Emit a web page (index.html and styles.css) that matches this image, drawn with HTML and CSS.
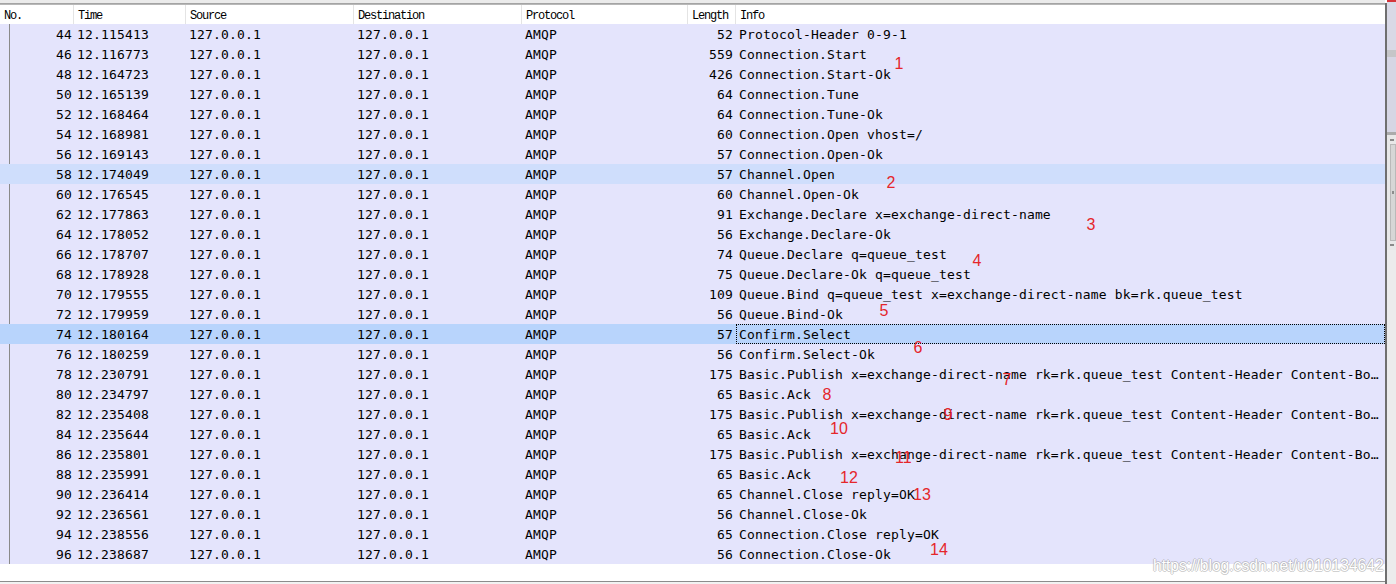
FILE: index.html
```html
<!DOCTYPE html>
<html>
<head>
<meta charset="utf-8">
<title>Wireshark AMQP</title>
<link rel="stylesheet" href="styles.css">
</head>
<body>
<div class="window">
  <div class="pane">
    <div class="topstrip"></div>
    <div class="header">
      <span class="hc">No.</span>
      <span class="hc">Time</span>
      <span class="hc">Source</span>
      <span class="hc">Destination</span>
      <span class="hc">Protocol</span>
      <span class="hc">Length</span>
      <span class="hc last">Info</span>
    </div>
    <div class="rows">
      <div class="row"><span class="num">44</span><span class="c">12.115413</span><span class="c">127.0.0.1</span><span class="c">127.0.0.1</span><span class="c">AMQP</span><span class="len">52</span><span class="c info">Protocol-Header 0-9-1</span></div>
      <div class="row"><span class="num">46</span><span class="c">12.116773</span><span class="c">127.0.0.1</span><span class="c">127.0.0.1</span><span class="c">AMQP</span><span class="len">559</span><span class="c info">Connection.Start</span></div>
      <div class="row"><span class="num">48</span><span class="c">12.164723</span><span class="c">127.0.0.1</span><span class="c">127.0.0.1</span><span class="c">AMQP</span><span class="len">426</span><span class="c info">Connection.Start-Ok</span></div>
      <div class="row"><span class="num">50</span><span class="c">12.165139</span><span class="c">127.0.0.1</span><span class="c">127.0.0.1</span><span class="c">AMQP</span><span class="len">64</span><span class="c info">Connection.Tune</span></div>
      <div class="row"><span class="num">52</span><span class="c">12.168464</span><span class="c">127.0.0.1</span><span class="c">127.0.0.1</span><span class="c">AMQP</span><span class="len">64</span><span class="c info">Connection.Tune-Ok</span></div>
      <div class="row"><span class="num">54</span><span class="c">12.168981</span><span class="c">127.0.0.1</span><span class="c">127.0.0.1</span><span class="c">AMQP</span><span class="len">60</span><span class="c info">Connection.Open vhost=/</span></div>
      <div class="row"><span class="num">56</span><span class="c">12.169143</span><span class="c">127.0.0.1</span><span class="c">127.0.0.1</span><span class="c">AMQP</span><span class="len">57</span><span class="c info">Connection.Open-Ok</span></div>
      <div class="row hl"><span class="num">58</span><span class="c">12.174049</span><span class="c">127.0.0.1</span><span class="c">127.0.0.1</span><span class="c">AMQP</span><span class="len">57</span><span class="c info">Channel.Open</span></div>
      <div class="row"><span class="num">60</span><span class="c">12.176545</span><span class="c">127.0.0.1</span><span class="c">127.0.0.1</span><span class="c">AMQP</span><span class="len">60</span><span class="c info">Channel.Open-Ok</span></div>
      <div class="row"><span class="num">62</span><span class="c">12.177863</span><span class="c">127.0.0.1</span><span class="c">127.0.0.1</span><span class="c">AMQP</span><span class="len">91</span><span class="c info">Exchange.Declare x=exchange-direct-name</span></div>
      <div class="row"><span class="num">64</span><span class="c">12.178052</span><span class="c">127.0.0.1</span><span class="c">127.0.0.1</span><span class="c">AMQP</span><span class="len">56</span><span class="c info">Exchange.Declare-Ok</span></div>
      <div class="row"><span class="num">66</span><span class="c">12.178707</span><span class="c">127.0.0.1</span><span class="c">127.0.0.1</span><span class="c">AMQP</span><span class="len">74</span><span class="c info">Queue.Declare q=queue_test</span></div>
      <div class="row"><span class="num">68</span><span class="c">12.178928</span><span class="c">127.0.0.1</span><span class="c">127.0.0.1</span><span class="c">AMQP</span><span class="len">75</span><span class="c info">Queue.Declare-Ok q=queue_test</span></div>
      <div class="row"><span class="num">70</span><span class="c">12.179555</span><span class="c">127.0.0.1</span><span class="c">127.0.0.1</span><span class="c">AMQP</span><span class="len">109</span><span class="c info">Queue.Bind q=queue_test x=exchange-direct-name bk=rk.queue_test</span></div>
      <div class="row"><span class="num">72</span><span class="c">12.179959</span><span class="c">127.0.0.1</span><span class="c">127.0.0.1</span><span class="c">AMQP</span><span class="len">56</span><span class="c info">Queue.Bind-Ok</span></div>
      <div class="row sel"><span class="num">74</span><span class="c">12.180164</span><span class="c">127.0.0.1</span><span class="c">127.0.0.1</span><span class="c">AMQP</span><span class="len">57</span><span class="c info">Confirm.Select</span></div>
      <div class="row"><span class="num">76</span><span class="c">12.180259</span><span class="c">127.0.0.1</span><span class="c">127.0.0.1</span><span class="c">AMQP</span><span class="len">56</span><span class="c info">Confirm.Select-Ok</span></div>
      <div class="row"><span class="num">78</span><span class="c">12.230791</span><span class="c">127.0.0.1</span><span class="c">127.0.0.1</span><span class="c">AMQP</span><span class="len">175</span><span class="c info">Basic.Publish x=exchange-direct-name rk=rk.queue_test Content-Header Content-Bo…</span></div>
      <div class="row"><span class="num">80</span><span class="c">12.234797</span><span class="c">127.0.0.1</span><span class="c">127.0.0.1</span><span class="c">AMQP</span><span class="len">65</span><span class="c info">Basic.Ack</span></div>
      <div class="row"><span class="num">82</span><span class="c">12.235408</span><span class="c">127.0.0.1</span><span class="c">127.0.0.1</span><span class="c">AMQP</span><span class="len">175</span><span class="c info">Basic.Publish x=exchange-direct-name rk=rk.queue_test Content-Header Content-Bo…</span></div>
      <div class="row"><span class="num">84</span><span class="c">12.235644</span><span class="c">127.0.0.1</span><span class="c">127.0.0.1</span><span class="c">AMQP</span><span class="len">65</span><span class="c info">Basic.Ack</span></div>
      <div class="row"><span class="num">86</span><span class="c">12.235801</span><span class="c">127.0.0.1</span><span class="c">127.0.0.1</span><span class="c">AMQP</span><span class="len">175</span><span class="c info">Basic.Publish x=exchange-direct-name rk=rk.queue_test Content-Header Content-Bo…</span></div>
      <div class="row"><span class="num">88</span><span class="c">12.235991</span><span class="c">127.0.0.1</span><span class="c">127.0.0.1</span><span class="c">AMQP</span><span class="len">65</span><span class="c info">Basic.Ack</span></div>
      <div class="row"><span class="num">90</span><span class="c">12.236414</span><span class="c">127.0.0.1</span><span class="c">127.0.0.1</span><span class="c">AMQP</span><span class="len">65</span><span class="c info">Channel.Close reply=OK</span></div>
      <div class="row"><span class="num">92</span><span class="c">12.236561</span><span class="c">127.0.0.1</span><span class="c">127.0.0.1</span><span class="c">AMQP</span><span class="len">56</span><span class="c info">Channel.Close-Ok</span></div>
      <div class="row"><span class="num">94</span><span class="c">12.238556</span><span class="c">127.0.0.1</span><span class="c">127.0.0.1</span><span class="c">AMQP</span><span class="len">65</span><span class="c info">Connection.Close reply=OK</span></div>
      <div class="row"><span class="num">96</span><span class="c">12.238687</span><span class="c">127.0.0.1</span><span class="c">127.0.0.1</span><span class="c">AMQP</span><span class="len">56</span><span class="c info">Connection.Close-Ok</span></div>
    </div>
    <div class="filler"></div>
    <div class="bottomline"></div>
    <div class="bottomrest"></div>
  </div>
  <div class="vborder"></div>
  <div class="side">
    <div class="s-red"></div>
    <div class="s-a"></div>
    <div class="s-b"></div>
    <div class="s-c"></div>
    <div class="s-d"></div>
    <div class="s-scroll">
      <div class="s-arrow"></div>
      <div class="s-thumb"><div class="s-grip"></div></div>
      <div class="s-arrow down"></div>
    </div>
    <div class="s-rest"></div>
  </div>
</div>

<div class="annos">
  <span class="anno a1">1</span>
  <span class="anno a2">2</span>
  <span class="anno a3">3</span>
  <span class="anno a4">4</span>
  <span class="anno a5">5</span>
  <span class="anno a6">6</span>
  <span class="anno a7">7</span>
  <span class="anno a8">8</span>
  <span class="anno a9">9</span>
  <span class="anno a10">10</span>
  <span class="anno a11">11</span>
  <span class="anno a12">12</span>
  <span class="anno a13">13</span>
  <span class="anno a14">14</span>
</div>
<div class="watermark">https://blog.csdn.net/u010134642</div>
</body>
</html>
```

FILE: styles.css
```css
* { box-sizing: border-box; }
html, body { margin: 0; padding: 0; background: #fff; }
body {
  width: 1396px;
  height: 584px;
  overflow: hidden;
  position: relative;
  font-family: "DejaVu Sans Mono", monospace;
}

.window { display: flex; height: 584px; }

.pane { width: 1385px; display: flex; flex-direction: column; }

.topstrip {
  height: 5px;
  background: linear-gradient(to bottom, #ebebeb 0 3px, #a4a4a4 3px 4px, #b8b8b8 4px 5px);
}

.header, .row {
  display: grid;
  grid-template-columns: 74px 112px 168px 168px 166px 48px 649px;
}

.header {
  height: 19px;
  background: #fff;
  font-family: "Liberation Mono", monospace;
  font-size: 12px;
  letter-spacing: -1.2px;
  color: #000;
}
.hc {
  padding-left: 4px;
  padding-top: 2px;
  line-height: 19px;
  border-right: 1px solid #e4e4e4;
  white-space: nowrap;
  overflow: hidden;
}
.hc.last { border-right: 0; margin-right: 1px; }

.row {
  height: 20px;
  background: #e4e4fc;
  font-size: 13px;
  letter-spacing: 0.17px;
  color: #000;
  white-space: pre;
}
.row > span {
  overflow: hidden;
  padding-top: 2px;
  line-height: 18px;
}
.num {
  text-align: right;
  padding-right: 2px;
  background: linear-gradient(to right, transparent 9px, #8a8a8a 9px 10px, transparent 10px);
}
.c { padding-left: 3px; }
.len { text-align: right; padding-right: 3px; }

.row.hl { background: #cfdefc; }
.row.sel { background: #b8d4fc; }
.row.hl .num, .row.sel .num { background: none; }
.row.sel .info { outline: 1px dotted #000; outline-offset: -1px; }

.filler { height: 17px; background: #fff; }
.bottomline { height: 1px; background: #8c8c8c; }
.bottomrest { height: 2px; background: #f2f2f2; }

.vborder { width: 2px; margin-top: 3px; background: #6f6f6f; }

.side { width: 9px; display: flex; flex-direction: column; }
.s-red { height: 2px; background: #d4343a; }
.s-a { height: 48px; background: #d9d9e6; }
.s-b { height: 7px; background: #c6c6c8; }
.s-c { height: 75px; background: #d6d6e4; }
.s-d { height: 3px; background: #ababab; }
.s-scroll {
  height: 115px;
  background: #e8e8e8;
  display: flex;
  flex-direction: column;
  align-items: flex-end;
  padding: 4px 0;
  gap: 3px;
}
.s-arrow { width: 4px; height: 2px; background: #8a8a8a; margin-right: 2px; }
.s-thumb {
  flex: 1;
  width: 6px;
  background: #d6d6d6;
  border: 1px solid #b9b9b9;
  display: flex;
  align-items: center;
  justify-content: center;
}
.s-grip { width: 2px; height: 3px; background: #8d8d8d; }
.s-rest { flex: 1; background: #ececec; }

.annos { position: absolute; left: 1px; top: 1.5px; }
.anno {
  position: absolute;
  font-family: "Liberation Sans", Arial, sans-serif;
  font-size: 16px;
  line-height: 16px;
  color: #e5262b;
}
.a1 { left: 893.5px; top: 54px; }
.a2 { left: 885.5px; top: 173px; }
.a3 { left: 1085.5px; top: 215px; }
.a4 { left: 971.5px; top: 251px; }
.a5 { left: 878.5px; top: 301px; }
.a6 { left: 912.5px; top: 338px; }
.a7 { left: 1001.5px; top: 370px; }
.a8 { left: 821.5px; top: 385px; }
.a9 { left: 942.5px; top: 405px; }
.a10 { left: 829px; top: 419px; }
.a11 { left: 894px; top: 448px; }
.a12 { left: 839px; top: 468px; }
.a13 { left: 912px; top: 485px; }
.a14 { left: 929px; top: 540px; }

.watermark {
  position: absolute;
  left: 1153px;
  top: 558px;
  font-family: "Liberation Sans", Arial, sans-serif;
  font-size: 15.6px;
  line-height: 16px;
  color: #ffffff;
  white-space: nowrap;
  text-shadow: 1px 0 0 rgba(150,150,150,.45), -1px 0 0 rgba(150,150,150,.45), 0 1px 0 rgba(150,150,150,.45), 0 -1px 0 rgba(150,150,150,.45);
}
```
